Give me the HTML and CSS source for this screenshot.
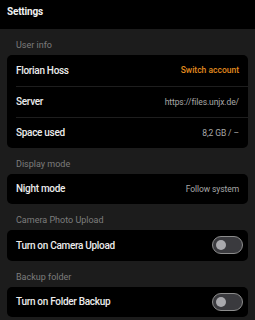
FILE: index.html
```html
<!DOCTYPE html>
<html lang="en">
<head>
    <meta charset="UTF-8">
    <meta name="viewport" content="width=device-width, initial-scale=1.0">
    <title>Settings</title>
    <link rel="stylesheet" href="styles.css">
</head>
<body>
    <!-- Top bar -->
    <div class="topbar">Settings</div>

    <div class="content">
        <div class="section-label">User info</div>
        <div class="card">
            <div class="row">
                <span class="row-title">Florian Hoss</span>
                <span class="row-action">Switch account</span>
            </div>
            <div class="row">
                <span class="row-title">Server</span>
                <span class="row-value">https://files.unjx.de/</span>
            </div>
            <div class="row">
                <span class="row-title">Space used</span>
                <span class="row-value">8,2 GB / &ndash;</span>
            </div>
        </div>

        <div class="section-label">Display mode</div>
        <div class="card">
            <div class="row">
                <span class="row-title">Night mode</span>
                <span class="row-value">Follow system</span>
            </div>
        </div>

        <div class="section-label">Camera Photo Upload</div>
        <div class="card">
            <div class="row toggle-row">
                <span class="row-title">Turn on Camera Upload</span>
                <span class="switch"><span class="knob"></span></span>
            </div>
        </div>

        <div class="section-label">Backup folder</div>
        <div class="card">
            <div class="row toggle-row">
                <span class="row-title">Turn on Folder Backup</span>
                <span class="switch"><span class="knob"></span></span>
            </div>
        </div>
    </div>
</body>
</html>
```

FILE: styles.css
```css
body {
    font-family: Roboto, 'Noto Sans', sans-serif;
    margin: 0;
    padding: 0;
    overflow: hidden;
    background: #1c1c1c;
    color: #ececec;
}

/* Top bar */
.topbar {
    height: 29px;
    box-sizing: border-box;
    padding: 5px 0 0 7px;
    background: #000;
    font-size: 10px;
    line-height: 13px;
    font-weight: 700;
    letter-spacing: -0.2px;
    color: #f2f2f2;
}

.content {
    padding: 0 7px;
}

.section-label {
    padding: 11px 9px 4px;
    font-size: 9px;
    line-height: 11px;
    color: #7d7d7d;
}

/* Cards */
.card {
    background: #000;
    border-radius: 5px;
    overflow: hidden;
}

.row {
    height: 30.5px;
    display: flex;
    align-items: center;
    justify-content: space-between;
    padding: 0 9px;
    box-sizing: border-box;
}

.row + .row {
    height: 31px;
    border-top: 1px solid #1e1e1e;
    margin-left: 9px;
    padding-left: 0;
}

.row-title {
    font-size: 10px;
    font-weight: 500;
    letter-spacing: -0.3px;
    color: #ececec;
}

.row-value {
    font-size: 8.5px;
    letter-spacing: -0.1px;
    color: #a8a8a8;
}

.row-action {
    font-size: 8.5px;
    font-weight: 500;
    color: #e38b1f;
}

/* Switch */
.toggle-row {
    padding-right: 5px;
}

.switch {
    width: 31px;
    height: 18px;
    box-sizing: border-box;
    border: 1.5px solid #8c8c8c;
    border-radius: 9px;
    background: #3a3a3e;
    display: flex;
    align-items: center;
    padding-left: 3px;
}

.knob {
    width: 10px;
    height: 10px;
    border-radius: 50%;
    background: #a9a9ad;
}
```
